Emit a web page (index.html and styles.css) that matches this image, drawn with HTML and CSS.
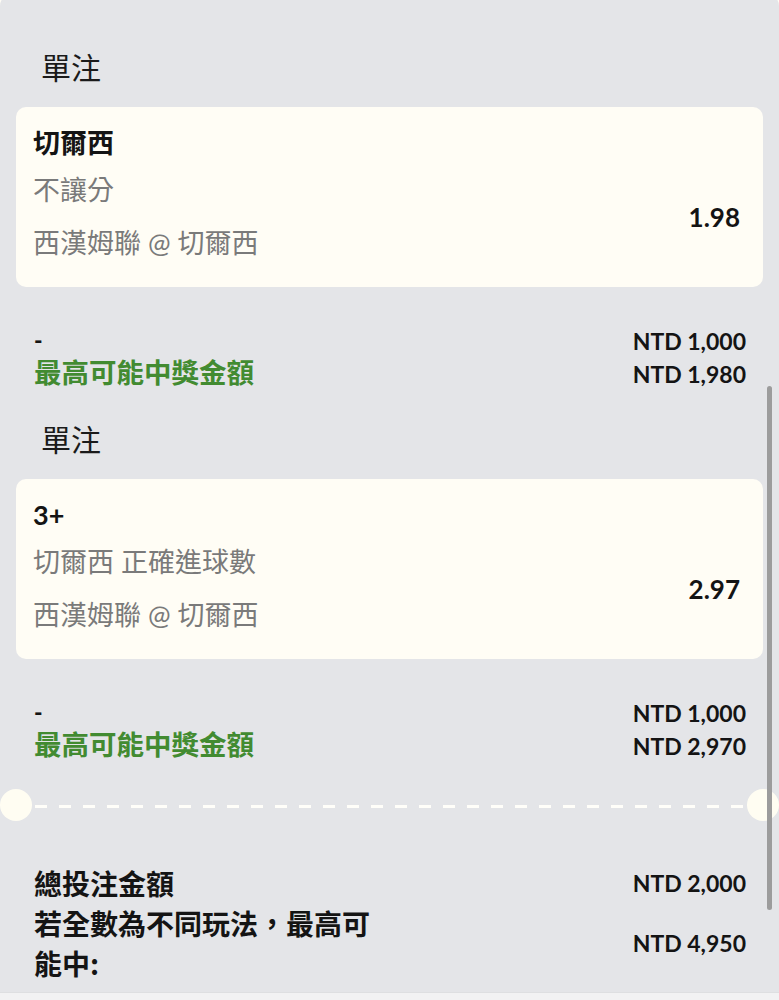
FILE: index.html
```html
<!DOCTYPE html>
<html lang="zh-Hant">
<head>
<meta charset="utf-8">
<title>投注單</title>
<link rel="stylesheet" href="styles.css">
</head>
<body>
<div class="panel">
  <section class="bet">
    <h2 class="bet-type">單注</h2>
    <div class="card">
      <div class="sel">切爾西</div>
      <div class="card-row">
        <div class="lines">
          <div class="market">不讓分</div>
          <div class="match">西漢姆聯 @ 切爾西</div>
        </div>
        <div class="odds">1.98</div>
      </div>
    </div>
    <div class="summary">
      <div class="sum-row"><span class="dash">-</span><span class="amt">NTD 1,000</span></div>
      <div class="sum-row"><span class="win">最高可能中獎金額</span><span class="amt">NTD 1,980</span></div>
    </div>
  </section>

  <section class="bet">
    <h2 class="bet-type">單注</h2>
    <div class="card">
      <div class="sel">3+</div>
      <div class="card-row">
        <div class="lines">
          <div class="market">切爾西 正確進球數</div>
          <div class="match">西漢姆聯 @ 切爾西</div>
        </div>
        <div class="odds">2.97</div>
      </div>
    </div>
    <div class="summary">
      <div class="sum-row"><span class="dash">-</span><span class="amt">NTD 1,000</span></div>
      <div class="sum-row"><span class="win">最高可能中獎金額</span><span class="amt">NTD 2,970</span></div>
    </div>
  </section>

  <div class="divider"><span class="notch"></span><span class="dashes"></span><span class="notch"></span></div>

  <div class="totals">
    <div class="tot-label">總投注金額</div>
    <div class="tot-amt">NTD 2,000</div>
    <div class="tot-label">若全數為不同玩法，最高可能中:</div>
    <div class="tot-amt">NTD 4,950</div>
  </div>
</div>
<div class="footer"></div>
<div class="scrollbar"></div>
</body>
</html>
```

FILE: styles.css
```css
html, body {
  margin: 0;
  padding: 0;
}
body {
  background: #fffdf5;
  font-family: Lato, "Noto Sans CJK TC", sans-serif;
  color: #141414;
  width: 779px;
  overflow: hidden;
}
.panel {
  background: #e4e5e8;
  border-radius: 12px 12px 0 0;
  margin-top: -6px;
  padding: 52px 0 9px;
}
.bet {
  padding: 0 16px;
}
.bet + .bet {
  margin-top: 28px;
}
.bet-type {
  margin: 0;
  padding-left: 25px;
  font-size: 30px;
  line-height: 40px;
  font-weight: 400;
  font-family: "Noto Sans CJK TC", sans-serif;
  color: #1a1a1a;
}
.card {
  margin-top: 21px;
  background: #fffdf5;
  border-radius: 10px;
  padding: 16px 23px 24px 17px;
}
.sel {
  font-size: 27px;
  line-height: 40px;
  font-weight: 700;
  color: #141414;
}
.card-row {
  margin-top: 7px;
  display: flex;
  align-items: center;
  justify-content: space-between;
}
.market, .match {
  font-size: 27px;
  line-height: 40px;
  color: #7a7a7a;
  font-weight: 400;
}
.match {
  margin-top: 13px;
}
.odds {
  font-family: Lato, sans-serif;
  font-weight: 700;
  font-size: 26px;
  color: #141414;
}
.summary {
  margin-top: 37px;
  padding: 0 17px 0 18px;
}
.sum-row {
  display: flex;
  justify-content: space-between;
  align-items: center;
  height: 33px;
}
.dash, .amt {
  font-family: Lato, sans-serif;
  font-weight: 700;
  font-size: 23px;
  line-height: 28px;
  color: #141414;
}
.dash {
  font-weight: 900;
  padding-bottom: 2px;
}
.win {
  font-size: 27.5px;
  line-height: 28px;
  padding-bottom: 5px;
  font-weight: 700;
  color: #428b31;
  font-family: "Noto Sans CJK TC", sans-serif;
}
.divider {
  margin-top: 27px;
  display: flex;
  align-items: center;
  height: 32px;
}
.notch {
  width: 32px;
  height: 32px;
  border-radius: 50%;
  background: #fffdf2;
  flex: none;
}
.dashes {
  flex: 1;
  height: 3px;
  margin: 2px 3px 0;
  background: repeating-linear-gradient(to right, #fffef9 0 12px, transparent 12px 24px);
}
.totals {
  margin-top: 42px;
  padding: 0 33px 0 34px;
  display: grid;
  grid-template-columns: 350px 1fr;
  align-items: center;
}
.tot-label {
  font-size: 28px;
  line-height: 40px;
  font-weight: 700;
  font-family: "Noto Sans CJK TC", sans-serif;
  color: #141414;
}
.tot-amt {
  text-align: right;
  font-family: Lato, sans-serif;
  font-weight: 700;
  font-size: 23px;
  color: #141414;
}
.footer {
  height: 20px;
  background: #f2f2f3;
  border-top: 1px solid #dedfe1;
}
.scrollbar {
  position: fixed;
  top: 386px;
  left: 767px;
  width: 5px;
  height: 524px;
  border-radius: 3px;
  background: #9c9c9c;
}
```
